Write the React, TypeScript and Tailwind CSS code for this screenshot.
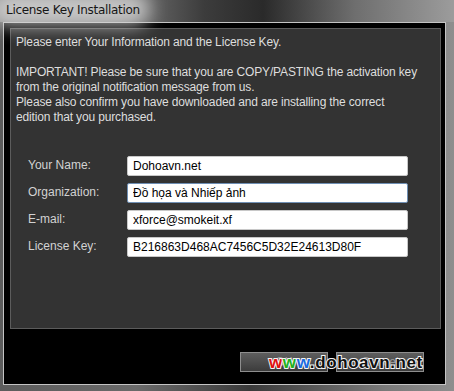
import React from 'react';

const fields = [
  { label: 'Your Name:', value: 'Dohoavn.net' },
  { label: 'Organization:', value: 'Đồ họa và Nhiếp ảnh', focused: true },
  { label: 'E-mail:', value: 'xforce@smokeit.xf' },
  { label: 'License Key:', value: 'B216863D468AC7456C5D32E24613D80F' },
];

export default function App() {
  return (
    <div className="relative w-[454px] h-[391px] overflow-hidden bg-[linear-gradient(to_right,#5c5c5c_0%,#6a6a6a_30%,#3a3a3a_55%,#7a7a7a_85%,#8e8e8e_100%)] font-['Liberation_Sans',Arial,sans-serif]">
      {/* title bar */}
      <div className="relative h-[22px] bg-[linear-gradient(to_right,#8a8a8a_0%,#7c7c7c_25%,#3c3c3c_45%,#2a2a2a_58%,#6e6e6e_78%,#9c9c9c_100%)]">
        <div className="absolute left-[-10px] top-[-8px] w-[160px] h-[34px] rounded-full bg-[#d8d8d8] blur-[9px] opacity-80" />
        <span className="relative block pl-[6px] pt-[2px] text-[12px] leading-[16px] text-[#161616] font-['DejaVu_Sans',sans-serif] tracking-[-0.3px]">
          License Key Installation
        </span>
      </div>

      {/* window body */}
      <div className="ml-[3px] w-[443px] h-[363px] border border-[#c4c4c4] bg-black pl-[6px] pt-[5px] pr-[4px]">
        <div className="h-[301px] border border-[#5c5c5c] bg-[#333333] pl-[5px] pt-[6px]">
          <div className="text-[12px] leading-[15px] text-[#dedede] tracking-[-0.15px]">
            <p>Please enter Your Information and the License Key.</p>
            <p>&nbsp;</p>
            <p>IMPORTANT! Please be sure that you are COPY/PASTING the activation key</p>
            <p>from the original notification message from us.</p>
            <p>Please also confirm you have downloaded and are installing the correct</p>
            <p>edition that you purchased.</p>
          </div>

          <div className="mt-[31px] pl-[12px] flex flex-col gap-[7px]">
            {fields.map(f => (
              <div key={f.label} className="flex items-center h-[20px]">
                <span className="w-[99px] text-[12px] text-[#d2d2d2] -mt-[2px]">{f.label}</span>
                <input
                  readOnly
                  value={f.value}
                  className={`w-[281px] h-[20px] rounded-[2px] bg-white px-[5px] text-[12px] text-black outline-none border ${f.focused ? 'border-[#6f8fb4]' : 'border-[#c8c8c8]'}`}
                />
              </div>
            ))}
          </div>
        </div>

        {/* buttons */}
        <div className="mt-[23px] flex justify-end gap-[8px] pr-[17px]">
          <button className="w-[88px] h-[20px] border border-[#8e8e8e] bg-[linear-gradient(to_bottom,#5e5e5e,#3c3c3c)] text-[12px] text-[#9a9a9a]">OK</button>
          <button className="w-[88px] h-[20px] border border-[#8e8e8e] bg-[linear-gradient(to_bottom,#5e5e5e,#3c3c3c)] text-[12px] text-[#9a9a9a]">Cancel</button>
        </div>
      </div>

      {/* watermark */}
      <div className="absolute left-[269px] top-[353px] text-[17px] leading-[20px] font-bold tracking-[0.6px] font-['Liberation_Sans',Arial,sans-serif] [-webkit-text-stroke:2px_#f4f4f4] [paint-order:stroke_fill]">
        <span className="text-[#e01010]">w</span>
        <span className="text-[#20b020]">w</span>
        <span className="text-[#1a6ae0]">w</span>
        <span className="text-[#111111]">.dohoavn.net</span>
      </div>
    </div>
  );
}
